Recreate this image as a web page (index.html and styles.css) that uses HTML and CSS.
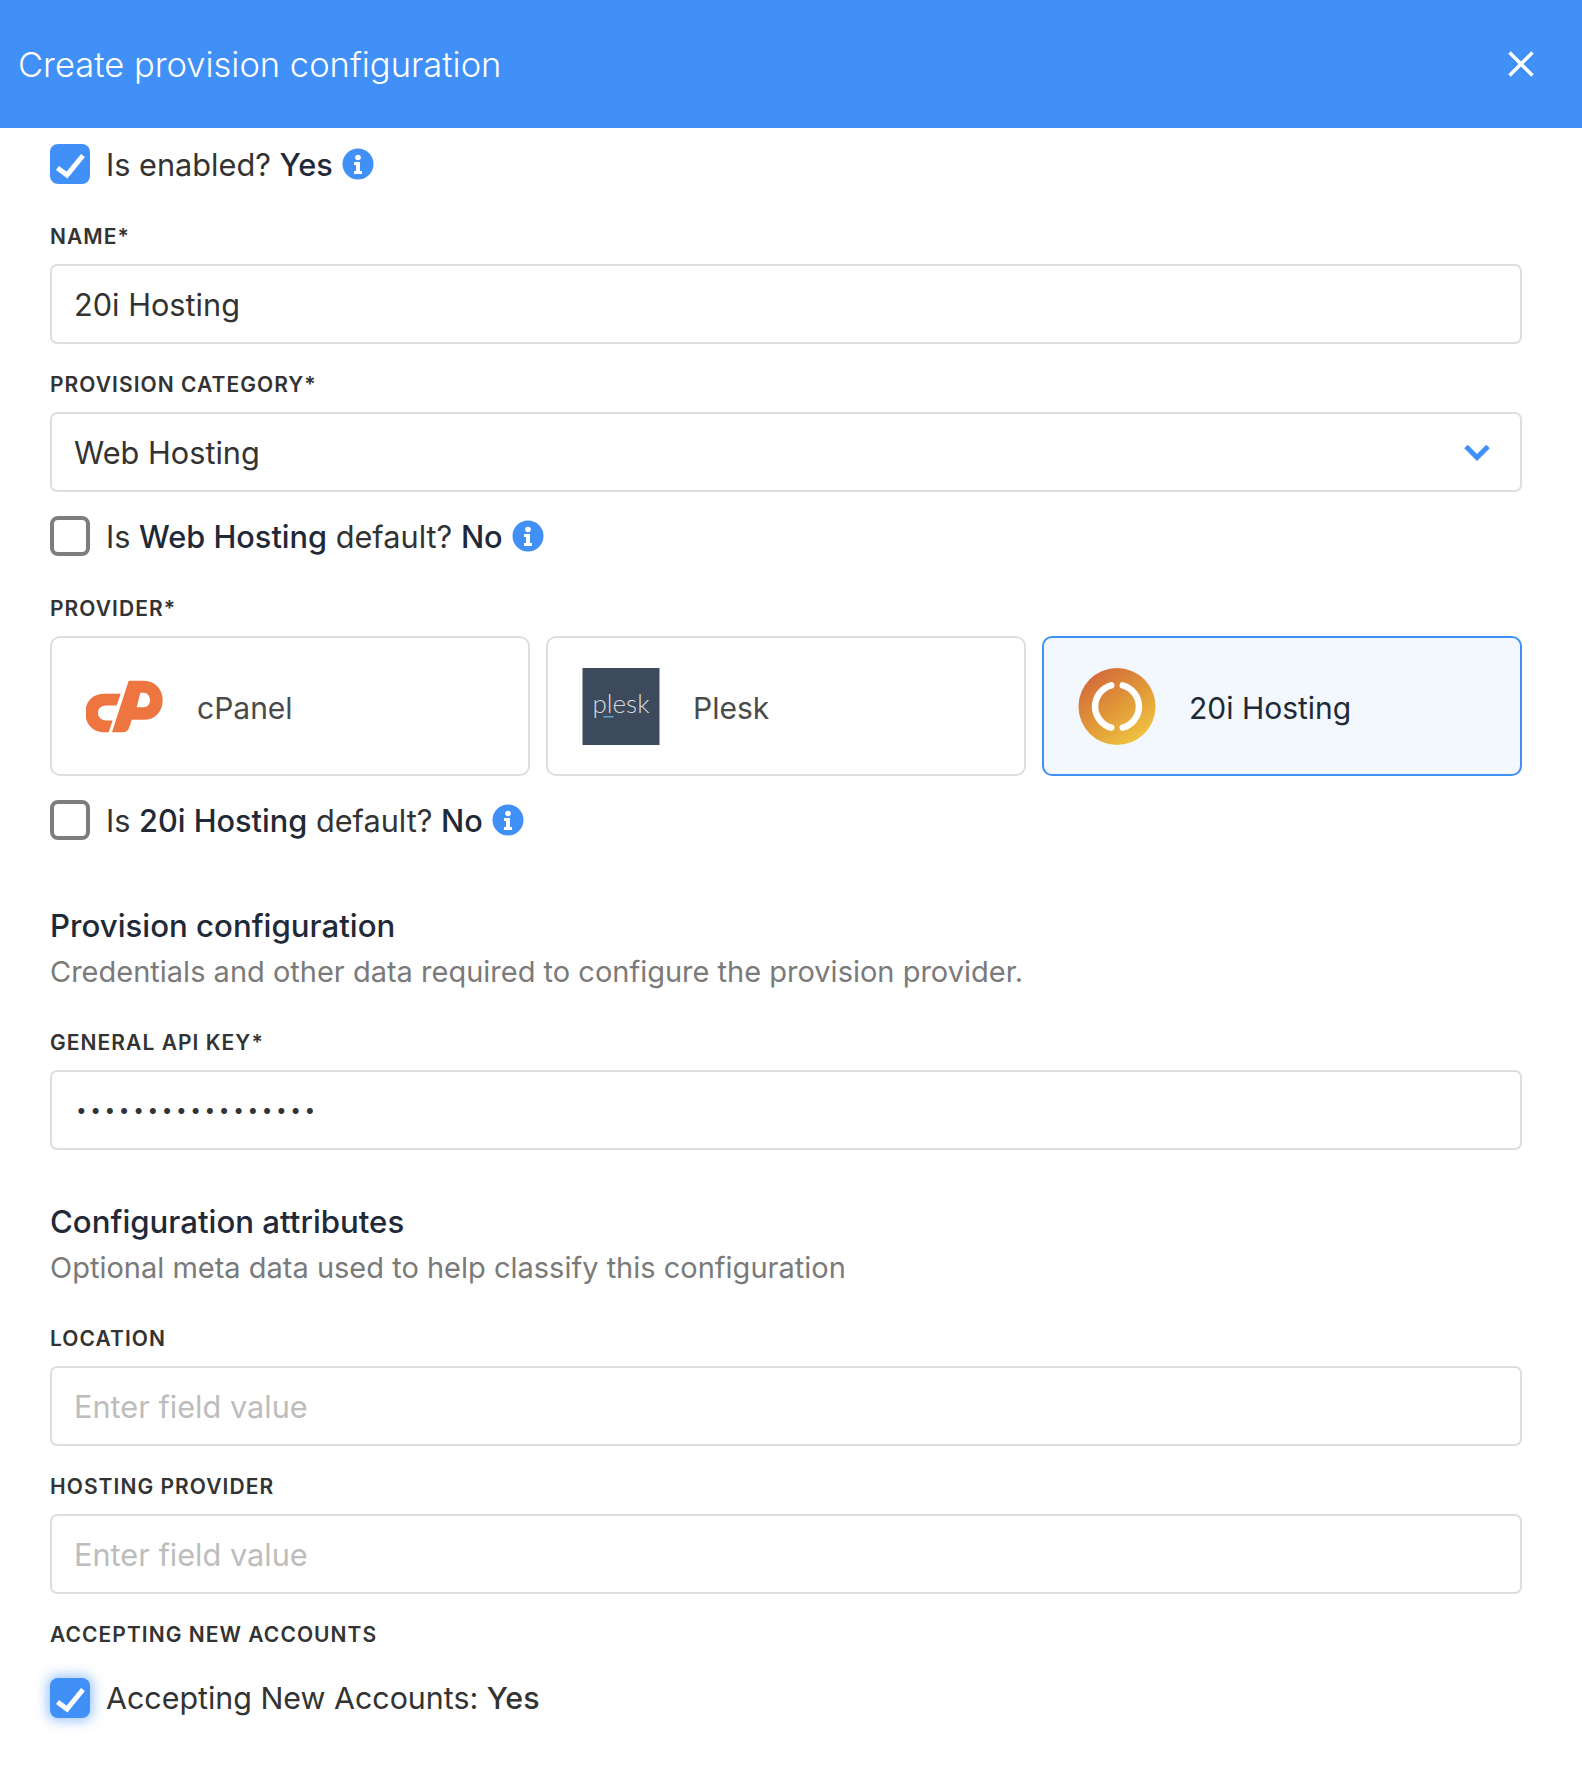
FILE: index.html
```html
<!DOCTYPE html>
<html lang="en">
<head>
    <meta charset="UTF-8">
    <meta name="viewport" content="width=device-width, initial-scale=1.0">
    <title>Create provision configuration</title>
    <link rel="stylesheet" href="styles.css">
</head>
<body>
    <header class="modal-header">
        <h1>Create provision configuration</h1>
        <button class="close" aria-label="Close">
            <svg viewBox="0 0 26 26" width="26" height="26"><path d="M1.5 1.5 L24.5 24.5 M24.5 1.5 L1.5 24.5"/></svg>
        </button>
    </header>

    <form class="form">
        <div class="check-row">
            <span class="check on"><svg viewBox="0 0 40 40"><path d="M7.5 24 L17 31 L33 11.5"/></svg></span>
            <span class="check-text">Is enabled? <b>Yes</b></span>
            <svg class="info" viewBox="0 0 32 32"><circle cx="16" cy="16" r="15.5"/><circle class="info-i" cx="16" cy="9.5" r="2.8"/><path class="info-i" d="M12 14 h6 v9 h2 v3 h-8 v-3 h2 v-6 h-2 z"/></svg>
        </div>

        <div class="field first">
            <label>Name*</label>
            <input type="text" value="20i Hosting">
        </div>

        <div class="field">
            <label>Provision category*</label>
            <div class="select">
                <span>Web Hosting</span>
                <svg viewBox="0 0 26 17" width="26" height="17"><path d="M2 2.5 L13 13.5 L24 2.5"/></svg>
            </div>
        </div>

        <div class="check-row after-input">
            <span class="check"></span>
            <span class="check-text">Is <b>Web Hosting</b> default? <b>No</b></span>
            <svg class="info" viewBox="0 0 32 32"><circle cx="16" cy="16" r="15.5"/><circle class="info-i" cx="16" cy="9.5" r="2.8"/><path class="info-i" d="M12 14 h6 v9 h2 v3 h-8 v-3 h2 v-6 h-2 z"/></svg>
        </div>

        <div class="field first">
            <label>Provider*</label>
            <div class="providers">
                <div class="provider">
                    <svg class="logo" viewBox="168 540 234 156"><path class="cp" fill-rule="evenodd" d="M272 580 L222 580 C190 580 166 602 166 637 C166 672 190 695 222 695 L236 695 L248 660 L228 660 C214 660 204 650 204 637 C204 624 214 615 228 615 L260 615 Z M296 541 L342 541 C374 541 398 566 398 600 C398 634 374 658 342 658 L305 658 L298 680 C295 690 288 695 278 695 L246 695 Z M331 577 L320 620 L342 620 C352 620 360 611 360 600 C360 587 352 577 342 577 Z"/></svg>
                    <span>cPanel</span>
                </div>
                <div class="provider">
                    <svg class="logo" viewBox="0 0 77 77"><rect width="77" height="77" fill="#3d4a5b"/><text x="38.5" y="45" text-anchor="middle" class="plesk-text">plesk</text><rect x="21" y="48" width="10" height="1.5" fill="#5aa6d0"/></svg>
                    <span>Plesk</span>
                </div>
                <div class="provider active">
                    <svg class="logo" viewBox="0 0 77 77">
                        <defs><linearGradient id="g20i" x1="0.15" y1="0.05" x2="0.8" y2="0.95"><stop offset="0" stop-color="#d3673d"/><stop offset="0.5" stop-color="#e09638"/><stop offset="1" stop-color="#efc540"/></linearGradient></defs>
                        <circle cx="38.5" cy="38.5" r="38.5" fill="url(#g20i)"/>
                        <path class="ring" d="M32.7 17.3 A22 22 0 0 0 32.7 59.7 M44.3 17.3 A22 22 0 0 1 44.3 59.7"/>
                    </svg>
                    <span>20i Hosting</span>
                </div>
            </div>
        </div>

        <div class="check-row after-cards">
            <span class="check"></span>
            <span class="check-text">Is <b>20i Hosting</b> default? <b>No</b></span>
            <svg class="info" viewBox="0 0 32 32"><circle cx="16" cy="16" r="15.5"/><circle class="info-i" cx="16" cy="9.5" r="2.8"/><path class="info-i" d="M12 14 h6 v9 h2 v3 h-8 v-3 h2 v-6 h-2 z"/></svg>
        </div>

        <section class="group">
            <h2>Provision configuration</h2>
            <p>Credentials and other data required to configure the provision provider.</p>
            <div class="field first-in-group">
                <label>General API key*</label>
                <input class="secret" type="password" value="aaaaaaaaaaaaaaaaa">
            </div>
        </section>

        <section class="group">
            <h2>Configuration attributes</h2>
            <p>Optional meta data used to help classify this configuration</p>
            <div class="field first-in-group">
                <label>Location</label>
                <input type="text" placeholder="Enter field value">
            </div>
            <div class="field">
                <label>Hosting provider</label>
                <input type="text" placeholder="Enter field value">
            </div>
            <div class="field">
                <label>Accepting new accounts</label>
                <div class="check-row plain">
                    <span class="check on glow"><svg viewBox="0 0 40 40"><path d="M7.5 24 L17 31 L33 11.5"/></svg></span>
                    <span class="check-text">Accepting New Accounts: <b>Yes</b></span>
                </div>
            </div>
        </section>
    </form>
</body>
</html>
```

FILE: styles.css
```css
* {
    box-sizing: border-box;
}

body {
    margin: 0;
    background-color: white;
    font-family: Inter, "Liberation Sans", sans-serif;
    color: #333;
}

.modal-header {
    display: flex;
    justify-content: space-between;
    align-items: center;
    height: 128px;
    padding: 0 48px 0 18px;
    background-color: #4090f7;
    color: white;
}

.modal-header h1 {
    margin: 0;
    font-size: 34.5px;
    font-weight: 300;
}

.close {
    display: flex;
    padding: 0;
    border: none;
    background: none;
}

.close path {
    fill: none;
    stroke: white;
    stroke-width: 3.5;
}

.form {
    padding: 16px 60px 55px 50px;
}

.check-row {
    display: flex;
    align-items: center;
    height: 40px;
}

.check-row.after-input {
    margin-top: 24px;
}

.check-row.after-cards {
    margin-top: 24px;
}

.check-row.plain {
    margin-top: 30px;
}

.check {
    flex: none;
    width: 40px;
    height: 40px;
    margin-right: 16px;
    border: 4px solid #7d7d7d;
    border-radius: 8px;
}

.check.on {
    border: none;
    background-color: #4090f7;
}

.check.glow {
    box-shadow: 0 0 12px 3px rgba(64, 144, 247, 0.5);
}

.check svg {
    display: block;
}

.check path {
    fill: none;
    stroke: white;
    stroke-width: 5;
}

.check-text {
    font-size: 30.7px;
    color: #333;
}

.check-text b {
    font-weight: 500;
    color: #1f2937;
}

.plain .check-text {
    font-size: 30.4px;
}

.plain .check-text b {
    color: #333;
}

.info {
    width: 32px;
    height: 32px;
    margin-left: 9px;
    fill: #4090f7;
}

.info .info-i {
    fill: white;
}

.field {
    margin-top: 26px;
}

.field.first {
    margin-top: 38px;
}

.field.first-in-group {
    margin-top: 36px;
}

label {
    display: block;
    height: 28px;
    margin-bottom: 14px;
    font-size: 21px;
    line-height: 30px;
    font-weight: 600;
    letter-spacing: 0.05em;
    text-transform: uppercase;
    color: #333;
}

input,
.select {
    display: flex;
    align-items: center;
    justify-content: space-between;
    width: 100%;
    height: 80px;
    padding: 0 22px;
    border: 2px solid #dedede;
    border-radius: 7px;
    font-family: inherit;
    font-size: 30.7px;
    color: #333;
    background-color: white;
}

input.secret {
    font-size: 19px;
    letter-spacing: 3.6px;
    padding-left: 24px;
}

input::placeholder {
    color: #bdbdbd;
}

.select {
    padding-right: 30px;
}

.select path {
    fill: none;
    stroke: #4090f7;
    stroke-width: 5;
}

.providers {
    display: grid;
    grid-template-columns: repeat(3, 1fr);
    gap: 16px;
}

.provider {
    display: flex;
    align-items: center;
    gap: 33px;
    height: 140px;
    padding: 0 34px;
    border: 2px solid #dedede;
    border-radius: 10px;
    font-size: 30px;
    color: #4a4a4a;
}

.provider span {
    padding-top: 3px;
}

.provider.active {
    border-color: #4090f7;
    background-color: #f3f8fe;
    color: #1f2937;
}

.logo {
    flex: none;
    width: 78px;
    height: 77px;
}

.cp {
    fill: #ef7540;
}

.plesk-text {
    font-family: Lato, sans-serif;
    font-size: 26px;
    font-weight: 300;
    fill: #d5dadf;
}

.ring {
    fill: none;
    stroke: white;
    stroke-width: 6.5;
    stroke-linecap: round;
}

.group {
    margin-top: 66px;
}

.group + .group {
    margin-top: 52px;
}

.group h2 {
    margin: 0;
    font-size: 31.2px;
    line-height: 40px;
    font-weight: 500;
    color: #1f2937;
}

.group p {
    margin: 6px 0 0;
    font-size: 29px;
    line-height: 40px;
    color: #7a7a7a;
}
```
